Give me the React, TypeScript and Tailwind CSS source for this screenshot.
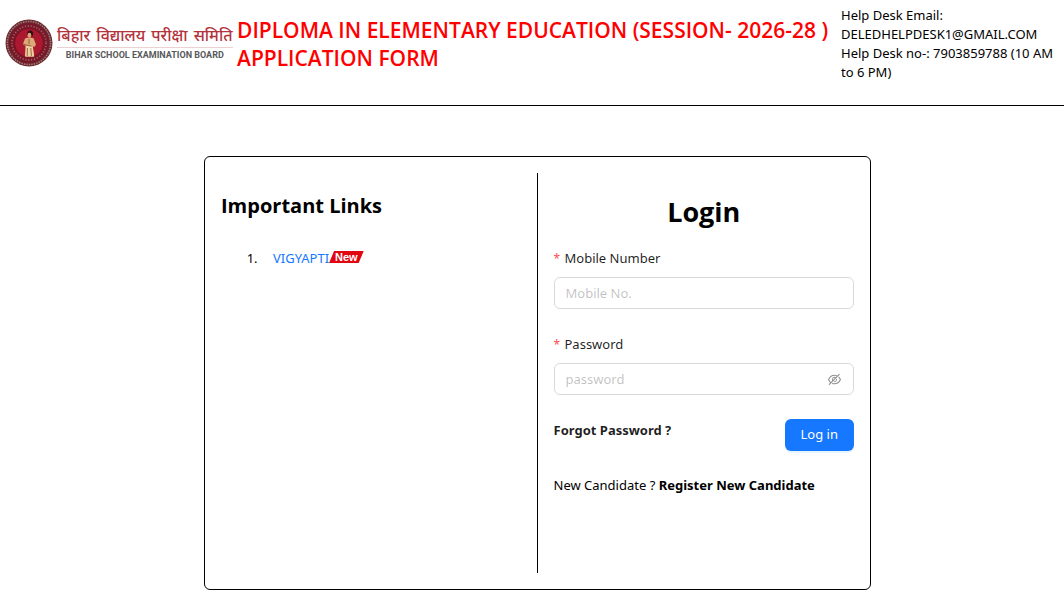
import { useState } from "react";
import type { ReactNode } from "react";
import { AiOutlineEye, AiOutlineEyeInvisible } from "react-icons/ai";

function Emblem() {
  return (
    <svg viewBox="0 0 48 48" className="size-12 shrink-0" aria-hidden="true">
      <circle cx="24" cy="24" r="23.5" fill="#6a2a31" />
      <circle cx="24" cy="24" r="21.6" fill="none" stroke="#b98f85" strokeWidth="1.5" strokeDasharray="1.4 1.1" opacity="0.8" />
      <circle cx="24" cy="24" r="20" fill="#76182a" />
      <circle cx="24" cy="24" r="17" fill="none" stroke="#c08a80" strokeWidth="1.8" strokeDasharray="1.2 1.7" opacity="0.6" />
      <circle cx="24" cy="24" r="14.4" fill="#ac1830" stroke="#7a0f20" strokeWidth="0.8" />
      <ellipse cx="25.2" cy="14.6" rx="2.9" ry="3.2" fill="#2d1012" />
      <ellipse cx="24.4" cy="16.2" rx="1.9" ry="2.4" fill="#dca277" />
      <path d="M20 19.6c2.4-1.4 6.4-1.4 8.6 0l2.4 6-1.8 2.6-1.4-1.4 1.2 10.8h-8.2l.6-10.4-3.6-1.8z" fill="#dba976" />
      <path d="M20.6 27l7 .2 1.6 10.4h-9.2z" fill="#ecd3a0" />
      <path d="M18 25.2l8.6 2M22.4 29l-.2 8M25.8 29l.6 8M24 20v5" stroke="#8a4632" strokeWidth="0.8" fill="none" />
    </svg>
  );
}

function Logo() {
  return (
    <div className="flex w-[232px] shrink-0 items-start gap-1 pt-[19px]">
      <Emblem />
      <div className="flex flex-col items-center pt-1 whitespace-nowrap">
        <span className="flex gap-[6px] border-b border-[#ead2d2] font-['Noto_Sans','Noto_Sans_Devanagari',sans-serif] text-[16px] leading-6 font-medium text-[#b3333c]">
          <span>बिहार</span> <span>विद्यालय</span> <span>परीक्षा</span> <span>समिति</span>
        </span>
        <span className="font-[Roboto,sans-serif] text-[9px] leading-[14px] font-bold text-[#58595b]">
          BIHAR SCHOOL EXAMINATION BOARD
        </span>
      </div>
    </div>
  );
}

function Field({ id, label, children }: { id: string; label: string; children: ReactNode }) {
  return (
    <div className="mb-6">
      <label htmlFor={id} className="flex h-6 items-center gap-1 text-[13px] text-black/88">
        <span className="w-[7px] text-[12px] text-[#ff4d4f]">*</span>
        {label}
      </label>
      <div className="mt-[6px] flex h-8 items-center rounded-md border border-[#d9d9d9] px-[11px]">{children}</div>
    </div>
  );
}

const inputClass =
  "min-w-0 flex-1 bg-transparent pt-[2px] text-[13px] text-black/88 outline-none placeholder:text-black/25";

export default function App() {
  const [visible, setVisible] = useState(false);

  return (
    <div className="font-['Noto_Sans',sans-serif] text-[13px] text-black">
      <header className="flex min-h-[106px] border-b border-black pl-[5px]">
        <Logo />
        <h1 className="flex-1 pt-4 font-['Open_Sans',sans-serif] text-[21px] leading-7 font-semibold text-[#ff0000]">
          DIPLOMA IN ELEMENTARY EDUCATION (SESSION- 2026-28 ) APPLICATION FORM
        </h1>
        <div className="w-[223px] shrink-0 pt-[6px] leading-[19px]">
          <p>Help Desk Email:</p>
          <p>DELEDHELPDESK1@GMAIL.COM</p>
          <p>Help Desk no-: 7903859788 (10 AM to 6 PM)</p>
        </div>
      </header>

      <main className="pt-[50px] pr-[193px] pl-[204px]">
        <div className="flex rounded-md border border-black p-4">
          <section className="min-h-[400px] w-1/2 pr-px">
            <h2 className="pt-[19px] font-['Open_Sans',sans-serif] text-[20px] leading-7 font-bold">Important Links</h2>
            <ol className="mt-[27px] list-decimal pl-10">
              <li className="pl-3 leading-[22px]">
                <span className="flex items-center">
                  <a href="#vigyapti" className="text-[#1677ff]">VIGYAPTI</a>
                  <span className="mb-[2px] flex h-3 items-center bg-[#e1060f] px-[6px] font-['Liberation_Sans',sans-serif] text-[11px] font-bold text-white [clip-path:polygon(5px_0,100%_0,calc(100%-5px)_100%,0_100%)]">
                    New
                  </span>
                </span>
              </li>
            </ol>
          </section>

          <section className="-ml-px flex-1 border-l border-black pl-4">
            <h2 className="pt-[19px] text-center font-['Open_Sans',sans-serif] text-[27px] leading-10 font-bold">Login</h2>
            <form className="pt-[15px]" onSubmit={(e) => e.preventDefault()}>
              <Field id="mobile" label="Mobile Number">
                <input id="mobile" type="text" placeholder="Mobile No." className={inputClass} />
              </Field>
              <Field id="password" label="Password">
                <input id="password" type={visible ? "text" : "password"} placeholder="password" className={inputClass} />
                <button
                  type="button"
                  aria-label="Toggle password visibility"
                  onClick={() => setVisible(!visible)}
                  className="text-black/45"
                >
                  {visible ? <AiOutlineEye size={15} /> : <AiOutlineEyeInvisible size={15} />}
                </button>
              </Field>
              <div className="flex items-start justify-between">
                <a href="#forgot" className="leading-[22px] font-bold text-black/88">Forgot Password ?</a>
                <button
                  type="submit"
                  className="h-8 rounded-md bg-[#1677ff] px-4 text-white shadow-[0_2px_0_rgba(5,145,255,0.1)]"
                >
                  Log in
                </button>
              </div>
            </form>
            <p className="mt-6 leading-5">
              New Candidate ?{" "}
              <a href="#register" className="font-bold">Register New Candidate</a>
            </p>
          </section>
        </div>
      </main>
    </div>
  );
}
